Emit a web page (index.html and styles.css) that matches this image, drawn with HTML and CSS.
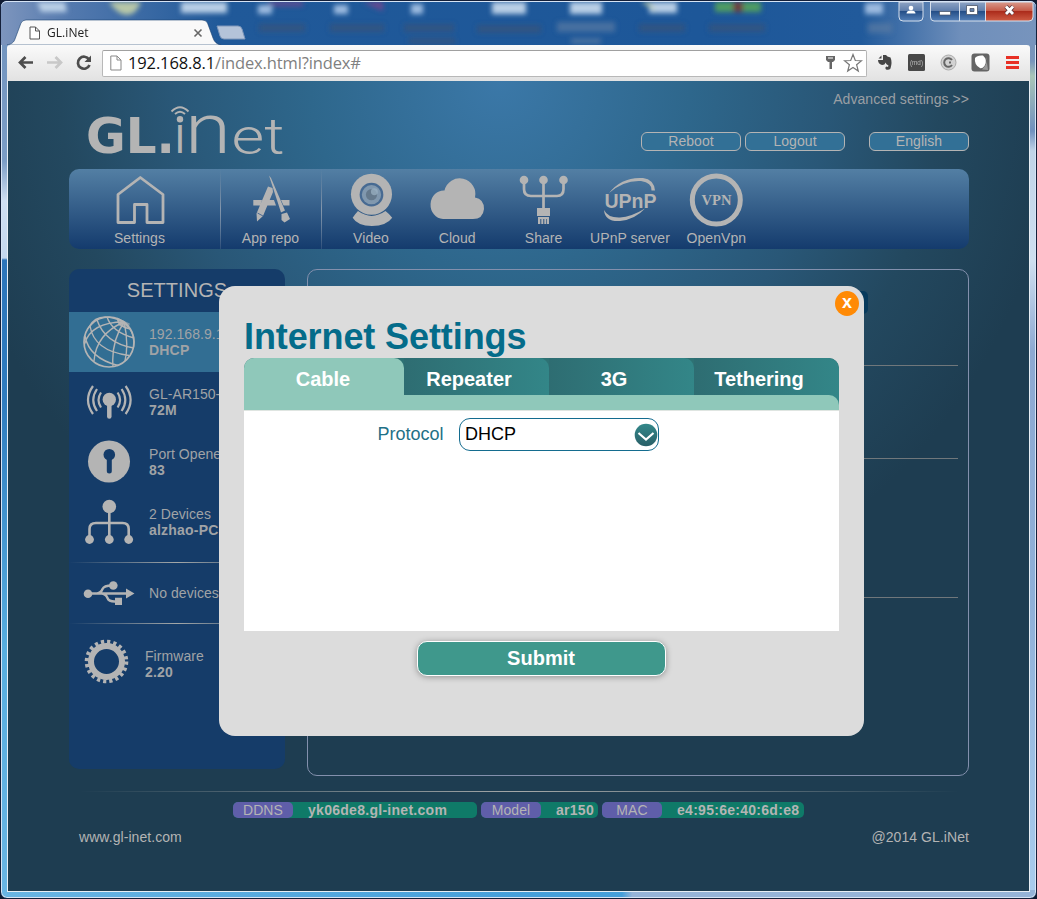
FILE: index.html
```html
<!DOCTYPE html>
<html lang="en">
<head>
<meta charset="utf-8">
<title>GL.iNet</title>
<link rel="stylesheet" href="styles.css">
</head>
<body>
<div class="window">
  <header class="titlebar">
    <svg class="glass" viewBox="0 0 1037 46" width="1037" height="46">
      <defs>
        <filter id="soft" x="-30%" y="-30%" width="160%" height="160%"><feGaussianBlur stdDeviation="2.6"/></filter>
      </defs>
      <g filter="url(#soft)">
        <path fill="#b9cfe6" d="M36 2h28l2 10H40zM180 2h46v11h-46zM491 2h34v12h-34zM569 2h32v12h-32zM648 2h28v11h-28z"/>
        <path fill="#b8c8a8" d="M108 2h32q-5 13-14 13T108 2zM640 2h8l8 10z"/>
        <path fill="#6a4a90" d="M266 2h36v4h-34zM362 2h20v9l-12-5z"/>
        <path fill="#9dbbe0" d="M257 5h14v9h-14zM333 5h14v9h-14zM410 4h12v10h-12zM864 3h18v11h-18z"/>
        <path fill="#4f9c62" d="M714 2h46v10h-46z"/><path fill="#6e4040" d="M732 2h10v10h-10z"/>
        <path fill="#3a5274" opacity=".6" d="M258 24h46v8h-46zM329 24h54v8h-54zM403 24h50v8h-50zM408 38h46v6h-46zM476 25h64v8h-64zM638 24h46v8h-46zM708 24h56v8h-56z"/>
        <path fill="#5a7aa4" opacity=".7" d="M556 22h58v10h-58zM570 38h30v6h-30zM867 23h24v10h-24z"/>
      </g>
    </svg>
    <div class="tab">
      <svg class="tab-shape" viewBox="0 0 216 26" width="216" height="26"><path d="M0 26C5 25 7 23 8 20L14 4Q15.500 1 19 1H195Q199 1 200.500 4L206 19Q208 25 214 26Z" fill="#f9f9f9" stroke="#1a3f6e" stroke-width=".6"/></svg>
      <svg class="tab-doc" viewBox="0 0 12 14" width="12" height="14"><path d="M1 1H6.500L10.500 5V13H1ZM6.500 1V5H10.500" fill="#fff" stroke="#555"/></svg>
      <span class="tab-title">GL.iNet</span>
      <svg class="tab-close" viewBox="0 0 10 10" width="10" height="10"><path d="M1.500 1.500L8.500 8.500M8.500 1.500L1.500 8.500" stroke="#666" stroke-width="1.600"/></svg>
    </div>
    <svg class="new-tab" viewBox="0 0 32 16" width="32" height="16"><path d="M2 1H23Q26 1 27 4L30 14H9Q6 14 5 11Z" fill="#b4c3d9" stroke="#7f97ba"/></svg>
    <svg class="controls" viewBox="896 0 140 22" width="140" height="22">
      <defs>
        <linearGradient id="cb" x2="0" y2="1"><stop stop-color="#8da3c4"/><stop offset=".45" stop-color="#607fac"/><stop offset=".5" stop-color="#254f88"/><stop offset="1" stop-color="#5480b8"/></linearGradient>
        <linearGradient id="cr" x2="0" y2="1"><stop stop-color="#d99a8c"/><stop offset=".45" stop-color="#c65d4b"/><stop offset=".5" stop-color="#ac2c1c"/><stop offset="1" stop-color="#ce5c44"/></linearGradient>
      </defs>
      <path d="M899 1V16Q899 20 903 20H919Q923 20 923 16V1Z" fill="url(#cb)" stroke="#d5dfec"/>
      <path d="M930.500 1V16Q930.500 20 934 20H986V1Z" fill="url(#cb)"/>
      <path d="M986 1V20H1029Q1033 20 1033 16V1Z" fill="url(#cr)"/>
      <path d="M930.500 1V16Q930.500 20 934 20H1029Q1033 20 1033 16V1ZM959.500 1V20M985.500 1V20" fill="none" stroke="#d5dfec"/>
      <circle cx="911" cy="7" r="2.300" fill="#fff"/><path d="M906.500 12.500Q906.500 9.500 911 9.500T915.500 12.500Z" fill="#fff"/>
      <rect x="939.500" y="10.500" width="11" height="3.500" fill="#fff" stroke="#4b5568" stroke-width=".7"/>
      <path d="M966.500 4.500H977.500V13.500H966.500ZM970 7.500H974V10.500H970Z" fill="#fff" fill-rule="evenodd" stroke="#4b5568" stroke-width=".8"/>
      <path d="M1006 5.500L1013 13M1013 5.500L1006 13" stroke="#523038" stroke-width="4.200"/><path d="M1006 5.500L1013 13M1013 5.500L1006 13" stroke="#fff" stroke-width="2.800"/>
    </svg>
  </header>

  <div class="toolbar">
    <svg class="nav-icons" viewBox="14 50 84 26" width="84" height="26" fill="none" stroke-width="2.700">
      <path d="M33 62.500H20M25.500 57L20 62.500L25.500 68" stroke="#4d4d4d"/>
      <path d="M47 62.500H60M55.500 57L61 62.500L55.500 68" stroke="#c8c8c8"/>
      <path d="M89 59.500A6 6 0 1 0 89.500 65" stroke="#4d4d4d"/><path d="M91 55.500V62H84.500Z" fill="#4d4d4d"/>
    </svg>
    <div class="omnibox">
      <svg viewBox="0 0 12 16" width="12" height="16"><path d="M.8 1H7L11 5V15H.8ZM7 1V5H11" fill="#fff" stroke="#888"/></svg>
      <span class="url">192.168.8.1<span class="path">/index.html?index#</span></span>
      <svg class="key" viewBox="0 0 12 16" width="12" height="16"><path d="M1 1H10V5L8 7H7V14H4.500V7H3L1 5ZM3 2.500V3.500H8V2.500Z" fill="#666" fill-rule="evenodd"/></svg>
      <svg viewBox="0 0 20 20" width="20" height="20"><path d="M10 1.500L12.300 7.500L18.500 7.700L13.600 11.700L15.300 18L10 14.400L4.700 18L6.400 11.700L1.500 7.700L7.700 7.500Z" fill="#fff" stroke="#777" stroke-width="1.200"/></svg>
    </div>
    <svg class="extensions" viewBox="872 50 152 26" width="152" height="26">
      <path d="M881.500 55.500V58.500H878.500ZM883 55H886L887.500 56.500L890.500 57.500Q892.500 62 890.500 68.500Q889 70.500 886 69.500Q884.500 67.500 886.500 66.500L888 67L888.500 65.500Q886 64.500 885.500 62.500Q885 65 882 65Q878 64 878 60H883Z" fill="#464646"/>
      <rect x="908" y="54" width="17" height="17" rx="1.500" fill="#484848"/><text x="910" y="65" class="md" textLength="13" lengthAdjust="spacingAndGlyphs">(md)</text>
      <circle cx="948.500" cy="62.500" r="7.500" fill="#d2d2d2" stroke="#aaa"/><path d="M952 60A4.300 4.300 0 1 0 952 65M949 62.500H951" fill="none" stroke="#666" stroke-width="2"/>
      <rect x="971.500" y="53.500" width="18" height="18" rx="3" fill="#656565"/><path d="M975 58Q977 55 983 55.500Q988 60 984.500 66Q982 69 980 68Q974 65 975 58Z" fill="#fff"/><path d="M986 56Q989 63 982 69.500L988 70Z" fill="#999"/>
      <path d="M1006 57.500H1019M1006 62.500H1019M1006 67.500H1019" stroke="#e83025" stroke-width="2.800"/>
    </svg>
  </div>

  <main class="page">
    <div class="site">
      <div class="masthead">
        <svg class="logo" viewBox="80 81 220 88" width="220" height="88" fill="#b4b4b4">
          <text class="logo-gl" x="86" y="153" textLength="89" lengthAdjust="spacingAndGlyphs">GL.</text>
          <text class="logo-i" x="175" y="153" textLength="10" lengthAdjust="spacingAndGlyphs">ı</text>
          <text class="logo-n" x="185" y="153" textLength="46" lengthAdjust="spacingAndGlyphs">n</text>
          <text class="logo-et" x="231.500" y="154" textLength="53" lengthAdjust="spacingAndGlyphs">et</text>
          <circle cx="180" cy="119.300" r="3.200"/>
          <path d="M175 114Q180 109.500 185 114M171.500 111.500Q180 103 188.500 111.500" fill="none" stroke="#b4b4b4" stroke-width="1.900"/>
        </svg>
        <div class="account">
          <a class="advanced">Advanced settings &gt;&gt;</a>
          <div class="buttons"><a class="pill">Reboot</a><a class="pill">Logout</a><a class="pill lang">English</a></div>
        </div>
      </div>

      <nav class="menu">
        <a class="menu-item first"><svg viewBox="112 173 56 54" width="56" height="54"><path d="M140.300 177.500L118 194.500V222.500H134.500V204.500H147V222.500H163V194.500Z" fill="none" stroke="#b4b4b4" stroke-width="2.800" stroke-linejoin="round"/></svg>Settings</a>
        <a class="menu-item ruled repo"><svg viewBox="243 173 56 54" width="56" height="54" fill="#b4b4b4"><path d="M253.300 200H262L260 205.500H253.300ZM267 200H274L276 205.500H265ZM281 200H289.500V205.500H283.500ZM268 186.500L272.500 188L273 192L263 216L257 221.500L256.500 213.500ZM269 175.500L271 178L285 210.500L281 212.500ZM281.500 214L287 212.500L290 219L284.500 222.500L281.500 220Z"/><path d="M257.500 213L263 216" stroke="#31588a" stroke-width=".8"/></svg>App repo</a>
        <a class="menu-item ruled video"><svg viewBox="343 172 56 56" width="56" height="56"><circle cx="371.500" cy="194" r="21.300" fill="#b4b4b4"/><circle cx="371.500" cy="194.500" r="12.300" fill="#476a92"/><circle cx="371.500" cy="194.500" r="10" fill="#8198ae"/><circle cx="371.500" cy="194.500" r="5.800" fill="#65798c"/><circle cx="374.500" cy="191.500" r="3.600" fill="#9db4c5" opacity=".7"/><path d="M352 218.500Q355 214 357.500 211.500Q371.500 221.500 386 211.500Q390 214.500 393 218.500Q387 227 372 227T352 218.500Z" fill="#b4b4b4"/></svg>Video</a>
        <a class="menu-item"><svg viewBox="429 172 56 54" width="56" height="54"><path d="M443 218A12.500 13.500 0 0 1 444.500 189.500A15.500 15.500 0 0 1 475 196.500Q484 198 484 208Q483 218 473 218Z" fill="#b4b4b4"/></svg>Cloud</a>
        <a class="menu-item"><svg viewBox="516 173 56 54" width="56" height="54" fill="#b4b4b4"><circle cx="524" cy="180" r="4.300"/><circle cx="543.500" cy="180" r="4.300"/><circle cx="563.500" cy="180" r="4.300"/><path d="M524 182V189Q524 196 531 196H557Q563.500 196 563.500 189V182M543.500 182V208" fill="none" stroke="#b4b4b4" stroke-width="2.700"/><path d="M537 208H550V216H537ZM538 217H549V224H547V219H546.300V224H544.300V219H543.300V224H541.300V219H540.300V224H538Z"/></svg>Share</a>
        <a class="menu-item"><svg viewBox="602 173 56 54" width="56" height="54" fill="#b4b4b4"><text x="604.500" y="207.500" class="upnp" textLength="52" lengthAdjust="spacingAndGlyphs">UPnP</text><path d="M609 193Q622 176.500 643 178Q654 179.500 655 190.500H651.500Q652 182.500 641 181Q624 180 609 193ZM604 210Q605 222 620 221Q635 219.500 645 208.500Q631 217 620 217.500Q608 218 604 210Z"/></svg>UPnP server</a>
        <a class="menu-item"><svg viewBox="688 173 56 54" width="56" height="54"><circle cx="716.300" cy="200" r="24" fill="none" stroke="#b4b4b4" stroke-width="5"/><text x="701.500" y="205" class="vpn" textLength="30" lengthAdjust="spacingAndGlyphs">VPN</text></svg>OpenVpn</a>
      </nav>

      <div class="columns">
        <aside class="sidebar">
          <h2>SETTINGS</h2>
          <div class="entry active">
            <svg viewBox="82 315 54 54" width="54" height="54" fill="none" stroke="#b4b4b4" stroke-width="1.400"><circle cx="109" cy="342" r="25" stroke-width="1.700"/><path d="M124 322Q98 310 89 327M124 322Q91 322 84.500 344M124 322Q96 334 94 361M124 322Q111 342 113 366.500M124 322Q129 343 125 361M124 322Q137 334 133 349M107 317Q112 332 134 338M97 320Q105 343 133.500 348M90 326Q94 351 129 355.500M85 336Q89 358 118 365.500M117 318Q119 327 130 329"/><path d="M118 319L129 324L128 328L119 325Z" fill="#b4b4b4" opacity=".6"/></svg>
            <p>192.168.9.1<b>DHCP</b></p>
          </div>
          <div class="entry">
            <svg viewBox="82 375 54 54" width="54" height="54" fill="none" stroke="#b4b4b4" stroke-width="2.200"><circle cx="109.300" cy="399.500" r="6.700" fill="#b4b4b4" stroke="none"/><path d="M109.300 400V416.500" stroke-width="4.500" stroke-linecap="round"/><path d="M101 392.500Q96 400 101 407.500M97 389Q89.500 400 97 411M93 386Q83 400 93 414M117.600 392.500Q122.600 400 117.600 407.500M121.600 389Q129 400 121.600 411M125.600 386Q135.600 400 125.600 414"/></svg>
            <p>GL-AR150-<b>72M</b></p>
          </div>
          <div class="entry">
            <svg viewBox="82 435 54 54" width="54" height="54"><circle cx="109" cy="461.500" r="21" fill="#b4b4b4"/><circle cx="109.300" cy="454.700" r="5.800" fill="#153c69"/><path d="M109.300 455V471" stroke="#153c69" stroke-width="5" stroke-linecap="round"/></svg>
            <p>Port Opened<b>83</b></p>
          </div>
          <div class="entry">
            <svg viewBox="82 495 54 54" width="54" height="54" fill="#b4b4b4"><circle cx="109.300" cy="506.500" r="6.800"/><circle cx="89.500" cy="539.500" r="4.400"/><circle cx="109.300" cy="539.500" r="4.400"/><circle cx="128.700" cy="539.500" r="4.400"/><path d="M89.500 538V529Q89.500 523 96 523H122.500Q128.700 523 128.700 529V538M109.300 510V538" fill="none" stroke="#b4b4b4" stroke-width="2.600"/></svg>
            <p>2 Devices<b>alzhao-PC</b></p>
          </div>
          <div class="entry fenced">
            <svg viewBox="82 566 54 54" width="54" height="54" fill="#b4b4b4"><circle cx="88" cy="593.700" r="4.300"/><circle cx="113.300" cy="585.500" r="4.300"/><path d="M115 597.700H122V605H115ZM126 588.500L134.500 593.500L126 598.500Z"/><path d="M88 593.500H128M97 593.500Q101 593 102.500 589Q104 585.500 112 585.500M102 593.500Q106 594 107.500 598Q109 602 116 601.500" fill="none" stroke="#b4b4b4" stroke-width="2.400"/></svg>
            <p>No devices</p>
          </div>
          <div class="entry firmware">
            <svg viewBox="80 633 54 54" width="54" height="54" fill="none" stroke="#b4b4b4"><circle cx="106.500" cy="660.500" r="15.500" stroke-width="6"/><circle cx="106.500" cy="660.500" r="19.800" stroke-width="4" stroke-dasharray="3.220 3" /></svg>
            <p>Firmware<b>2.20</b></p>
          </div>
        </aside>
        <section class="panel">
          <div class="row head"><span class="chip"></span></div>
          <div class="row second"></div>
          <div class="row third"></div>
        </section>
      </div>

      <hr class="fade">
      <div class="facts">
        <span class="fact"><i>DDNS</i><b class="ddns">yk06de8.gl-inet.com</b></span>
        <span class="fact"><i>Model</i><b class="model">ar150</b></span>
        <span class="fact"><i>MAC</i><b class="mac">e4:95:6e:40:6d:e8</b></span>
      </div>
      <footer class="footer"><span>www.gl-inet.com</span><span>@2014 GL.iNet</span></footer>
    </div>
  </main>
</div>

<div class="modal">
  <span class="close">x</span>
  <h1>Internet Settings</h1>
  <div class="tabs">
    <span class="choice on">Cable</span>
    <div class="others">
      <div class="bar"><span class="choice">Repeater</span><span class="choice">3G</span><span class="choice">Tethering</span></div>
      <div class="shelf"><span></span></div>
    </div>
  </div>
  <div class="form">
    <label>Protocol</label>
    <div class="select"><span>DHCP</span>
      <svg viewBox="0 0 24 24" width="24" height="24"><defs><linearGradient id="dd" x2="0" y2="1"><stop stop-color="#33888a"/><stop offset="1" stop-color="#295f68"/></linearGradient></defs><circle cx="12" cy="12" r="11.300" fill="url(#dd)"/><path d="M4.500 10L12 16.500L19.500 10" fill="none" stroke="#fff" stroke-width="2.200"/></svg>
    </div>
  </div>
  <div class="submit">Submit</div>
</div>
</body>
</html>
```
FILE: styles.css
```css
* { box-sizing: border-box; }

body {
  margin: 0;
  width: 1037px;
  height: 899px;
  overflow: hidden;
  position: relative;
  background: #101a30;
  font: 14px/16px "Liberation Sans", Arial, sans-serif;
  letter-spacing: .06px;
  color: #b4b4b4;
}

/* Browser window */
.window {
  height: 899px;
  display: flex;
  flex-direction: column;
  padding: 0 7px 7px;
  border: 1px solid #14203a;
  border-radius: 7px;
  box-shadow: inset 0 0 0 1px #d6e4f5;
  background:
    linear-gradient(90deg, transparent 60%, #96b4d8 61%) bottom / 100% 8px no-repeat,
    linear-gradient(90deg, #69b5e3, #459fda 50%) bottom / 100% 8px no-repeat,
    linear-gradient(#7092bd 0, #7b9dc6 160px, #cfdff2 200px, #c3d7ee 257px, #2c75ba 259px, #2f7cbf 400px, #58aee0 650px, #69b5e3) left / 8px 100% no-repeat,
    linear-gradient(#7592bb 0, #7895bb 60px, #a9c6b8 75px, #7090be 130px, #c0d4e8 150px, #cedff0 260px, #8da9d2 350px, #8fb0d8 600px, #a9cdee) right / 8px 100% no-repeat,
    #1f5c9f;
}

.titlebar {
  height: 44px;
  margin: 0 -7px;
  display: flex;
  position: relative;
  border-top: 1px solid #d6e4f5;
  border-radius: 6px 6px 0 0;
  overflow: hidden;
  background: linear-gradient(90deg, #7d95bd 0, #5379ae 70px, #205999 220px, #1d5799 700px, #215a9b 860px, #6f8fbb 960px, #7794bd);
}
.glass { position: absolute; left: 0; top: -2px; }

.tab {
  position: relative;
  width: 208px;
  height: 26px;
  margin: 17px 0 0 6px;
  padding: 2px 0 0 22px;
  display: flex;
  align-items: center;
  color: #222;
}
.tab-shape { position: absolute; left: 0; top: 0; }
.tab-doc, .tab-title, .tab-close { position: relative; }
.tab-title { margin-left: 6px; width: 146px; font: 12px/16px "Open Sans", sans-serif; }
.new-tab { position: relative; margin-top: 23px; }
.controls { position: relative; margin-left: auto; margin-right: 0; margin-top: -1px; }

.toolbar {
  height: 36px;
  margin: 0 -1px 0 -1px;
  flex: none;
  display: flex;
  align-items: center;
  position: relative;
  border-radius: 3px 3px 0 0;
  background: linear-gradient(#fafafa, #e2e2e2);
}
.nav-icons { margin-left: 7px; flex: none; }
.omnibox {
  width: 765px;
  height: 27px;
  margin-left: 4px;
  padding: 0 3px 0 7px;
  display: flex;
  align-items: center;
  background: #fff;
  border: 1px solid #b8b8b8;
  border-top-color: #a0a0a0;
  border-radius: 2px;
}
.url { margin-left: 6px; flex: 1; color: #111; font: 16.5px/24px "Open Sans", sans-serif; letter-spacing: -.13px; }
.path { color: #808080; }
.key { margin-right: 6px; }
.extensions { margin-left: 5px; }
.md { font: 7px "Liberation Sans", sans-serif; fill: #bbb; letter-spacing: 0; }

/* Router page */
.page {
  flex: none;
  width: 1021px;
  height: 810px;
  padding-left: 61px;
  background: radial-gradient(circle at 492px 0, #3b78a8 0, #2e678c 190px, #295777 330px, #23485f 440px, #1e3d51 560px);
  box-shadow: 0 0 0 1px #e7eef4;
}
.site { width: 900px; display: flex; flex-direction: column; }
.masthead { height: 88px; display: flex; justify-content: space-between; }
.logo { margin-left: 11px; overflow: visible; letter-spacing: 0; }
.logo-gl { font: bold 49px "DejaVu Sans", sans-serif; }
.logo-i { font: 53px Roboto, sans-serif; }
.logo-n { font: 300 70px Roboto, sans-serif; }
.logo-et { font: 300 50px Roboto, sans-serif; }
.account { display: flex; flex-direction: column; align-items: flex-end; padding-top: 10px; }
.advanced { color: #9a9fa4; }
.buttons { display: flex; gap: 4px; margin-top: 25px; }
.pill {
  width: 100px;
  height: 19px;
  border: 1px solid #b4b4b4;
  border-radius: 6px;
  background: #327096;
  text-align: center;
  line-height: 17px;
}
.lang { margin-left: 20px; }

.menu {
  height: 80px;
  display: flex;
  border-radius: 10px;
  background: linear-gradient(#537fa4, #143b6d);
}
.menu-item {
  width: 86.4px;
  padding-top: 4px;
  display: flex;
  flex-direction: column;
  align-items: center;
  white-space: nowrap;
  height: 80px;
}
.menu-item svg { height: 54px; margin-bottom: 3px; overflow: visible; flex: none; letter-spacing: 0; }
.first { width: 151px; padding-right: 10px; }
.ruled { background: linear-gradient(rgba(180,180,190,0), #8497ac 50%, rgba(180,180,190,.15)) left / 1px 100% no-repeat; }
.repo { width: 101px; }
.video { width: 93px; padding-left: 7px; }
.upnp { font: bold 19.5px "Liberation Sans", sans-serif; }
.vpn { font: bold 14.5px "Liberation Serif", serif; fill: #b4b4b4; }

.columns { display: flex; justify-content: space-between; align-items: flex-start; margin-top: 20px; }
.sidebar { width: 216px; height: 500px; border-radius: 10px; background: #153c69; }
.sidebar h2 { margin: 0; height: 43px; font: 20px/42px "Liberation Sans", sans-serif; text-align: center; }
.entry { height: 60px; display: flex; align-items: center; padding-left: 13px; }
.entry svg { flex: none; margin-right: 13px; }
.entry p { margin: 0; color: #a0a3a6; white-space: nowrap; }
.entry b { display: block; letter-spacing: .2px; }
.active { background: #326e93; }
.fenced {
  height: 62px;
  margin-top: 10px;
  background:
    linear-gradient(90deg, transparent, #a4a8a8 50%, transparent) top / 100% 1px no-repeat,
    linear-gradient(90deg, transparent, #a4a8a8 50%, transparent) bottom / 100% 1px no-repeat;
}
.firmware { margin-top: 10px; padding-left: 11px; }
.firmware svg { margin: -7px 11px 0 0; }

.panel { width: 662px; height: 507px; border: 1px solid #8390ad; border-radius: 10px; padding: 0 10px; }
.row { border-bottom: 1px solid #70777b; height: 139px; }
.head { height: 96px; display: flex; justify-content: flex-end; padding: 21px 90px 0 0; }
.second { height: 93px; }
.chip { width: 70px; height: 23px; border-radius: 5px; background: #073a5c; }

.fade { width: 880px; height: 1px; border: 0; margin: 15px 10px 10px; background: linear-gradient(90deg, transparent, #a4a8a8 50%, transparent); }
.facts { display: flex; gap: 4px; margin-left: 164px; }
.fact { display: flex; height: 16px; border-radius: 5px; background: #0f7a68; line-height: 16px; }
.fact i { width: 60px; border-radius: 5px; background: #5f5ea9; font-style: normal; text-align: center; }
.fact b { padding-left: 15px; letter-spacing: .28px; }
.ddns { width: 184px; }
.model { width: 57px; }
.mac { width: 142px; }
.footer { display: flex; justify-content: space-between; padding-left: 10px; margin-top: 11px; }

/* Dialog */
.modal {
  position: absolute;
  left: 219px;
  top: 286px;
  width: 645px;
  height: 450px;
  padding: 29px 25px 0;
  border-radius: 16px;
  background: #dcdcdc;
  letter-spacing: 0;
}
.close {
  position: absolute;
  right: 5px;
  top: 5px;
  width: 24px;
  height: 25px;
  border-radius: 50%;
  background: #ff8a05;
  color: #fff;
  font: bold 18px/22px "Liberation Sans", sans-serif;
  text-align: center;
}
.modal h1 { margin: 0; height: 43px; font: bold 36px/44px "Liberation Sans", sans-serif; letter-spacing: -.1px; color: #046c8a; white-space: nowrap; }
.tabs { display: flex; height: 53px; border-bottom: 1px solid #dfe5e1; background: #2e7274; border-radius: 10px 10px 0 0; overflow: hidden; }
.choice { flex: 1; height: 37px; padding-right: 15px; border-radius: 0 10px 0 0; text-align: center; color: #fff; font: bold 20px/42px "Liberation Sans", sans-serif; background: linear-gradient(90deg, #2e6d72, #338688); }
.on { flex: none; width: 160px; height: 52px; padding-right: 2px; background: #8fc8ba; }
.others { flex: 1; }
.bar { display: flex; }
.shelf { height: 15px; background: #338688; }
.shelf span { display: block; height: 15px; background: #8fc8ba; border-radius: 0 10px 0 0; }
.form { height: 220px; padding: 7px 0 0 133.5px; display: flex; align-items: flex-start; background: #fff; }
.form label { width: 81.5px; font-size: 18px; line-height: 32px; color: #1f7187; }
.select {
  width: 200px;
  height: 33px;
  padding: 0 0 0 5px;
  display: flex;
  align-items: center;
  justify-content: space-between;
  border: 1px solid #146c8f;
  border-radius: 11px;
  color: #000;
  font-size: 18px;
}
.select span { margin-top: -2px; }
.submit {
  width: 249px;
  height: 35px;
  margin: 10px 0 0 172.5px;
  border: 1px solid #fff;
  border-radius: 10px;
  background: #3f988c;
  box-shadow: 0 1px 6px rgba(0,0,0,.35);
  color: #fff;
  font: bold 20px/33px "Liberation Sans", sans-serif;
  text-align: center;
}
```
